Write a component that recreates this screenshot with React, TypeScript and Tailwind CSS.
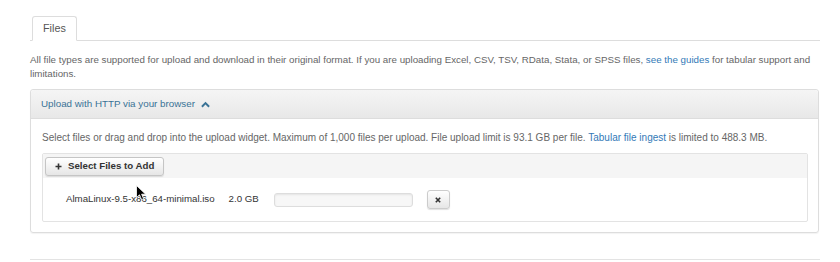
import React from "react";

export default function App() {
  return (
    <div
      className="relative w-[840px] h-[262px] overflow-hidden bg-white text-[#555]"
      style={{ fontFamily: '"Liberation Sans", Arial, sans-serif' }}
    >
      <div className="ml-[30px] w-[790px] pt-[16px]">
        {/* Tabs */}
        <div className="flex border-b border-[#ddd] h-[25px]">
          <div className="h-[25px] px-[10px] flex items-center border border-[#ddd] border-b-white bg-white rounded-t-[3px] text-[10.8px] text-[#555] ml-[2px]">
            Files
          </div>
        </div>

        {/* Description */}
        <p className="mt-[12px] text-[9.75px] leading-[14px] text-[#666]">
          All file types are supported for upload and download in their original format. If you are uploading Excel, CSV, TSV,
          RData, Stata, or SPSS files, <span className="text-[#337ab7]">see the guides</span> for tabular support and
          limitations.
        </p>

        {/* Panel */}
        <div className="mt-[8px] w-[789px] border border-[#ddd] rounded-[3px] shadow-[0_1px_1px_rgba(0,0,0,0.05)]">
          <div className="h-[29px] flex items-center px-[10px] bg-gradient-to-b from-[#f5f5f5] to-[#e8e8e8] border-b border-[#ddd] rounded-t-[3px]">
            <span className="text-[9.8px] text-[#3a7396]">Upload with HTTP via your browser</span>
            <svg className="ml-[6px]" width="9" height="7" viewBox="0 0 10 7">
              <path d="M1 6 L5 2 L9 6" fill="none" stroke="#3a7396" strokeWidth="2.2" />
            </svg>
          </div>
          <div className="px-[11px] pt-[12px] pb-[10px]">
            <p className="text-[10px] leading-[14px] text-[#666]">
              Select files or drag and drop into the upload widget. Maximum of 1,000 files per upload. File upload limit is 93.1 GB
              per file. <span className="text-[#337ab7]">Tabular file ingest</span> is limited to 488.3 MB.
            </p>
            <div className="mt-[8px] w-[766px] border border-[#e3e3e3] rounded-[2px]">
              <div className="h-[24px] bg-[#f5f5f5] flex items-center px-[2px]">
                <button className="h-[19px] flex items-center gap-[6px] px-[9px] border border-[#c5c5c5] rounded-[3px] bg-gradient-to-b from-white to-[#e6e6e6] text-[9.7px] font-bold text-[#333] shadow-[0_1px_1px_rgba(0,0,0,0.1)]">
                  <svg width="7" height="7" viewBox="0 0 7 7">
                    <path d="M3.5 0.5 V6.5 M0.5 3.5 H6.5" stroke="#333" strokeWidth="1.6" />
                  </svg>
                  Select Files to Add
                </button>
              </div>
              <div className="h-[43px] flex items-center pl-[23px]">
                <span className="text-[9.7px] text-[#333]">AlmaLinux-9.5-x86_64-minimal.iso</span>
                <span className="ml-[14px] text-[9.7px] text-[#333]">2.0 GB</span>
                <div className="ml-[15px] w-[139px] h-[14px] border border-[#ddd] rounded-[3px] bg-[#f7f7f7] shadow-[inset_0_1px_2px_rgba(0,0,0,0.08)]" />
                <button className="ml-[14px] w-[23px] h-[19px] flex items-center justify-center border border-[#ccc] rounded-[3px] bg-gradient-to-b from-white to-[#e6e6e6] shadow-[0_1px_1px_rgba(0,0,0,0.12)]">
                  <svg width="6" height="6" viewBox="0 0 6 6">
                    <path d="M0.8 0.8 L5.2 5.2 M5.2 0.8 L0.8 5.2" stroke="#333" strokeWidth="1.6" />
                  </svg>
                </button>
              </div>
            </div>
          </div>
        </div>

        <div className="mt-[26px] border-t border-[#e3e3e3]" />
      </div>

      {/* mouse cursor */}
      <svg className="absolute left-[136px] top-[185px]" width="11" height="16" viewBox="0 0 11 16">
        <path d="M0.5 0.5 L0.5 12.5 L3.5 9.8 L5.6 14.6 L7.6 13.7 L5.6 9.2 L9.6 9.2 Z" fill="#000" stroke="#fff" strokeWidth="0.8" />
      </svg>
    </div>
  );
}
